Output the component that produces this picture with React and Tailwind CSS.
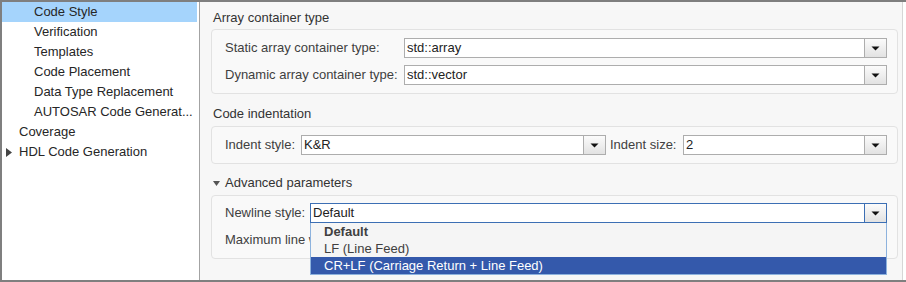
// Code generation settings pane: tree on the left, grouped options on the right.

const treeItems = [
  { label: 'Code Style', indent: 32, selected: true },
  { label: 'Verification', indent: 32 },
  { label: 'Templates', indent: 32 },
  { label: 'Code Placement', indent: 32 },
  { label: 'Data Type Replacement', indent: 32 },
  { label: 'AUTOSAR Code Generat...', indent: 32 },
  { label: 'Coverage', indent: 17 },
  { label: 'HDL Code Generation', indent: 17, collapsed: true },
];

const newlineOptions = ['Default', 'LF (Line Feed)', 'CR+LF (Carriage Return + Line Feed)'];

const Arrow = () => (
  <svg width="9" height="5" viewBox="0 0 9 5">
    <path d="M0.5 0.5 H8.5 L4.5 4.5 Z" fill="#111" />
  </svg>
);

// Editable combo box with the little grey drop button at its right end.
const Combo = ({ value, className = '', focused = false }) => (
  <div
    className={`flex h-[20px] bg-white border ${
      focused ? 'border-[#3c6fb4]' : 'border-[#adadad]'
    } ${className}`}
  >
    <div className="flex-1 pl-[2px] leading-[18px] text-[#222] truncate">{value}</div>
    <div
      className={`w-[22px] flex items-center justify-center border-l bg-gradient-to-b from-[#fbfbfb] to-[#e2e2e2] ${
        focused ? 'border-[#3c6fb4]' : 'border-[#adadad]'
      }`}
    >
      <Arrow />
    </div>
  </div>
);

const SectionTitle = ({ children }) => (
  <div className="h-[20px] flex items-center pl-[2px] text-[#333]">{children}</div>
);

const GroupBox = ({ children, className = '' }) => (
  <div
    className={`border border-[#e2e2e2] rounded-[4px] bg-[#f9f9f9] pl-[13px] pr-[10px] ${className}`}
  >
    {children}
  </div>
);

export default function App() {
  return (
    <div
      className="w-[906px] h-[282px] flex border-l-2 border-t-2 border-b-2 border-[#7f7f7f] bg-white text-[13px] overflow-hidden"
      style={{ fontFamily: '"Liberation Sans", Arial, sans-serif' }}
    >
      {/* tree */}
      <div className="w-[198px] shrink-0 pr-[2px] border-r border-[#a3a3a3] bg-white">
        {treeItems.map((item) => (
          <div
            key={item.label}
            className={`h-[20px] flex items-center relative text-[#262626] ${
              item.selected ? 'bg-[#a5d4fc]' : ''
            }`}
            style={{ paddingLeft: item.indent }}
          >
            {item.collapsed && (
              <svg
                width="6"
                height="9"
                viewBox="0 0 6 9"
                className="absolute left-[4px] top-[6px]"
              >
                <path d="M0 0 L6 4.5 L0 9 Z" fill="#444" />
              </svg>
            )}
            {item.label}
          </div>
        ))}
      </div>

      {/* settings */}
      <div className="w-[703px] shrink-0 bg-[#f7f7f7] border-r border-[#d6d6d6] pl-[11px] pr-[4px] pt-[6px]">
        <SectionTitle>Array container type</SectionTitle>
        <GroupBox className="mt-[1px] pt-[8px] pb-[8px] flex flex-col gap-[7px]">
          <div className="flex items-center">
            <div className="w-[179px] text-[#404040]">Static array container type:</div>
            <Combo value="std::array" className="flex-1" />
          </div>
          <div className="flex items-center">
            <div className="w-[179px] text-[#404040]">Dynamic array container type:</div>
            <Combo value="std::vector" className="flex-1" />
          </div>
        </GroupBox>

        <SectionTitle>
          <span className="mt-[19px]">Code indentation</span>
        </SectionTitle>
        <GroupBox className="mt-[12px] pt-[8px] pb-[8px]">
          <div className="flex items-center">
            <div className="w-[76px] text-[#404040]">Indent style:</div>
            <Combo value="K&R" className="w-[305px]" />
            <div className="w-[77px] pl-[4px] text-[#404040]">Indent size:</div>
            <Combo value="2" className="flex-1" />
          </div>
        </GroupBox>

        <div className="mt-[9px] h-[20px] flex items-center text-[#333]">
          <svg width="7" height="5" viewBox="0 0 7 5" className="ml-[2px] mr-[5px]">
            <path d="M0 0 H7 L3.5 5 Z" fill="#555" />
          </svg>
          Advanced parameters
        </div>
        <GroupBox className="mt-[2px] pt-[7px] pb-[8px] flex flex-col gap-[7px]">
          <div className="flex items-center relative">
            <div className="w-[85px] text-[#404040]">Newline style:</div>
            <div className="flex-1 relative">
              <Combo value="Default" focused />
              {/* open drop-down list */}
              <div className="absolute left-0 right-0 top-[20px] z-10 border border-t-0 border-[#8db2dd] bg-[#f5f5f5]">
                {newlineOptions.map((opt, i) => (
                  <div
                    key={opt}
                    className={`h-[17px] pl-[13px] leading-[17px] ${
                      i === 0 ? 'font-bold text-[#333]' : ''
                    } ${i === 2 ? 'bg-[#3459ab] text-white' : 'text-[#404040]'}`}
                  >
                    {opt}
                  </div>
                ))}
              </div>
            </div>
          </div>
          {/* label partly hidden behind the open list */}
          <div className="h-[20px] w-[85px] flex items-center whitespace-nowrap overflow-hidden text-[#404040]">
            Maximum line width:
          </div>
        </GroupBox>
      </div>
    </div>
  );
}
